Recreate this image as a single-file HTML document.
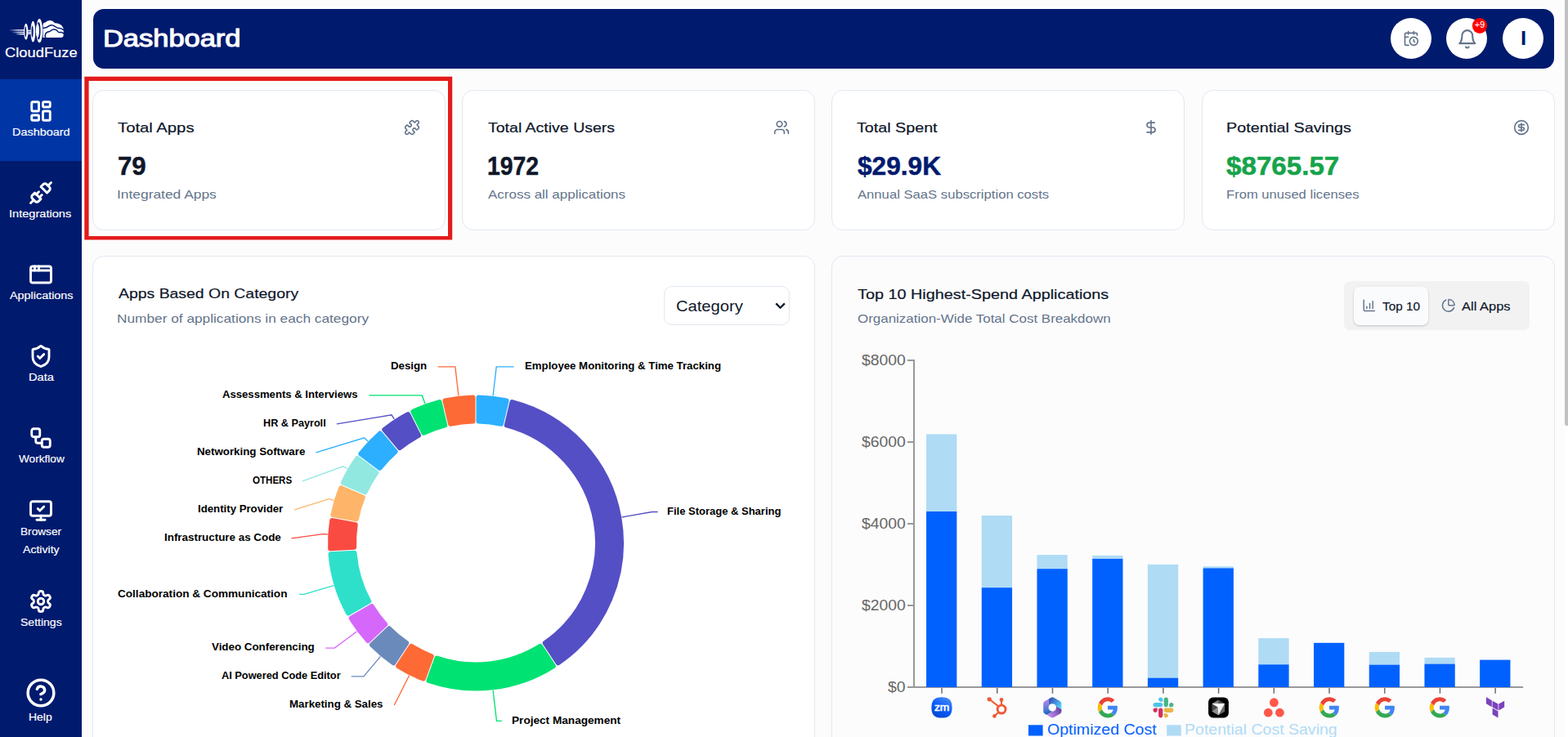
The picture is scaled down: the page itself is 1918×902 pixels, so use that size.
<!DOCTYPE html>
<html lang="en"><head><meta charset="utf-8"><title>Dashboard - CloudFuze</title>
<style>
*{box-sizing:border-box}
html,body{margin:0;padding:0}
body{width:1918px;height:902px;overflow:hidden;position:relative;background:#fcfcfd;font-family:"Liberation Sans",sans-serif}
.abs,.t,.ic{position:absolute}
.t{white-space:nowrap;line-height:1;transform-origin:0 0;display:block}
.side{left:0;top:0;width:100px;height:902px;background:#001a6e}
.act{left:0;top:97px;width:100px;height:100px;background:#0035a6}
.top{left:114px;top:10.8px;width:1787.2px;height:73px;border-radius:13px;background:#001a6e}
.rnd{width:50.4px;height:50.4px;border-radius:50%;background:#fff;top:21.8px}
.badge{left:1800.8px;top:22px;width:18.6px;height:18.6px;border-radius:50%;background:#ff0000}
.card{background:#fff;border:1px solid #e2e8f0;border-radius:14px}
.hl{left:103.3px;top:93.6px;width:450px;height:199.2px;border:5.2px solid #e41a1a}
.sel{left:812px;top:350px;width:154px;height:48px;border:1px solid #e2e8f0;border-radius:10px;background:#fff}
.tabs{left:1644px;top:343.8px;width:227.2px;height:60.2px;border-radius:7px;background:#f2f2f3}
.tab{left:1656px;top:351px;width:91.2px;height:46.9px;border-radius:7px;background:#fafbfd;box-shadow:0 1px 3px rgba(0,0,0,.13),0 1px 2px rgba(0,0,0,.08)}
.track{left:1914px;top:0;width:4px;height:902px;background:#fff}
.thumb{left:1913.8px;top:-4px;width:8px;height:524.7px;border-radius:2.5px;background:#c1c1c1}
svg.full{left:0;top:0}
</style></head>
<body>
<div class="abs" style="left:100px;top:0;width:1.4px;height:902px;background:#fff"></div>
<nav class="abs side">
<div class="abs act"></div>
<svg class="ic" style="left:0;top:0" width="100" height="60" viewBox="0 0 100 60" fill="none">
<defs><linearGradient id="sl" x1="0" y1="0" x2="1" y2="0"><stop offset="0" stop-color="#fff" stop-opacity="0"/><stop offset="0.5" stop-color="#fff" stop-opacity=".8"/><stop offset="1" stop-color="#fff"/></linearGradient></defs>
<rect x="11" y="36.1" width="20" height="1.5" fill="url(#sl)"/><rect x="14" y="38.8" width="17" height="1.5" fill="url(#sl)"/><rect x="18.5" y="41" width="12.5" height="1.5" fill="url(#sl)"/>
<path d="M34.3 37.4h4.800M34.300 39.500h4.800M34.300 41.400h4.800" stroke="#fff" stroke-width="1.3"/>
<ellipse cx="31.8" cy="38.8" rx="2.6" ry="10" fill="#fff"/><ellipse cx="31.300" cy="38.800" rx="1" ry="6.500" fill="#001a6e"/>
<ellipse cx="40.4" cy="38.7" rx="2.9" ry="12.9" fill="#fff"/><ellipse cx="39.600" cy="38.700" rx="1.100" ry="7.200" fill="#001a6e"/>
<ellipse cx="48.2" cy="37.7" rx="3.9" ry="14.6" fill="#fff"/><ellipse cx="47.300" cy="37.700" rx="2.300" ry="10.800" fill="#001a6e"/><ellipse cx="46" cy="37.600" rx="2" ry="8.600" fill="#fff"/>
<path d="M52.6 46V30.200q.1-2.600 2.800-2.700 2.100-2.700 5.800-2.600 3.900.200 5.600 3.300 5-.500 8.500 2.900 2.600 2.700 2.400 6.100v5.800q-.100 3-3.200 3Z" fill="#fff"/>
<path d="M52.400 34.200c2.800.300 4.700-.300 6.500-1.800 2.500-2.100 5.400-2.200 8-.300 1.800 1.400 3 2.400 5.200 2.300 2.300-.100 4.300.800 5.800 2.600" stroke="#001a6e" stroke-width="1.500"/>
<path d="M55.600 46.500c-.900-3.300.100-6.500 3-7.500 1.500-.500 2.300-.400 3.300-1.300 2.700-2.400 6.600-2.200 8.700.700 1 1.300 1.600 1.600 3.200 1.200 2-.500 3.600.400 4.200 2" stroke="#001a6e" stroke-width="1.500"/>
</svg>

<svg class="ic" style="left:35.00px;top:121.00px" width="30" height="30" viewBox="0 0 24 24" fill="none" stroke="#fff" stroke-width="2.3" stroke-linecap="round" stroke-linejoin="round"><rect width="7" height="9" x="3" y="3" rx="1"/><rect width="7" height="5" x="14" y="3" rx="1"/><rect width="7" height="9" x="14" y="12" rx="1"/><rect width="7" height="5" x="3" y="16" rx="1"/></svg>
<svg class="ic" style="left:35.00px;top:221.00px" width="30" height="30" viewBox="0 0 24 24" fill="none" stroke="#fff" stroke-width="2.3" stroke-linecap="round" stroke-linejoin="round"><path d="m19 5 3-3"/><path d="m2 22 3-3"/><path d="M6.3 20.3a2.4 2.4 0 0 0 3.4 0L12 18l-6-6-2.3 2.3a2.4 2.4 0 0 0 0 3.4Z"/><path d="M7.5 13.5 10 11"/><path d="M10.5 16.5 13 14"/><path d="m12 6 6 6 2.3-2.3a2.4 2.4 0 0 0 0-3.4l-2.6-2.6a2.4 2.4 0 0 0-3.4 0Z"/></svg>
<svg class="ic" style="left:35.00px;top:321.00px" width="30" height="30" viewBox="0 0 24 24" fill="none" stroke="#fff" stroke-width="2.3" stroke-linecap="round" stroke-linejoin="round"><rect x="2" y="4" width="20" height="16" rx="2"/><path d="M10 4v4"/><path d="M2 8h20"/><path d="M6 4v4"/></svg>
<svg class="ic" style="left:35.00px;top:421.00px" width="30" height="30" viewBox="0 0 24 24" fill="none" stroke="#fff" stroke-width="2.3" stroke-linecap="round" stroke-linejoin="round"><path d="M20 13c0 5-3.5 7.5-7.66 8.95a1 1 0 0 1-.67-.01C7.5 20.5 4 18 4 13V6a1 1 0 0 1 1-1c2 0 4.5-1.2 6.24-2.72a1.17 1.17 0 0 1 1.52 0C14.51 3.81 17 5 19 5a1 1 0 0 1 1 1z"/><path d="m9 12 2 2 4-4"/></svg>
<svg class="ic" style="left:35.00px;top:521.00px" width="30" height="30" viewBox="0 0 24 24" fill="none" stroke="#fff" stroke-width="2.3" stroke-linecap="round" stroke-linejoin="round"><rect width="8" height="8" x="3" y="3" rx="2"/><path d="M7 11v4a2 2 0 0 0 2 2h4"/><rect width="8" height="8" x="13" y="13" rx="2"/></svg>
<svg class="ic" style="left:35.00px;top:610.00px" width="30" height="30" viewBox="0 0 24 24" fill="none" stroke="#fff" stroke-width="2.3" stroke-linecap="round" stroke-linejoin="round"><path d="m9 10 2 2 4-4"/><rect width="20" height="14" x="2" y="3" rx="2"/><path d="M12 17v4"/><path d="M8 21h8"/></svg>
<svg class="ic" style="left:35.00px;top:721.00px" width="30" height="30" viewBox="0 0 24 24" fill="none" stroke="#fff" stroke-width="2.3" stroke-linecap="round" stroke-linejoin="round"><path d="M12.22 2h-.44a2 2 0 0 0-2 2v.18a2 2 0 0 1-1 1.73l-.43.25a2 2 0 0 1-2 0l-.15-.08a2 2 0 0 0-2.73.73l-.22.38a2 2 0 0 0 .73 2.73l.15.1a2 2 0 0 1 1 1.72v.51a2 2 0 0 1-1 1.74l-.15.09a2 2 0 0 0-.73 2.73l.22.38a2 2 0 0 0 2.73.73l.15-.08a2 2 0 0 1 2 0l.43.25a2 2 0 0 1 1 1.73V20a2 2 0 0 0 2 2h.44a2 2 0 0 0 2-2v-.18a2 2 0 0 1 1-1.73l.43-.25a2 2 0 0 1 2 0l.15.08a2 2 0 0 0 2.73-.73l.22-.39a2 2 0 0 0-.73-2.73l-.15-.08a2 2 0 0 1-1-1.74v-.5a2 2 0 0 1 1-1.74l.15-.09a2 2 0 0 0 .73-2.73l-.22-.38a2 2 0 0 0-2.73-.73l-.15.08a2 2 0 0 1-2 0l-.43-.25a2 2 0 0 1-1-1.73V4a2 2 0 0 0-2-2z"/><circle cx="12" cy="12" r="3"/></svg>
<svg class="ic" style="left:30.70px;top:828.80px" width="38" height="38" viewBox="0 0 24 24" fill="none" stroke="#fff" stroke-width="2.2" stroke-linecap="round" stroke-linejoin="round"><circle cx="12" cy="12" r="10"/><path d="M9.09 9a3 3 0 0 1 5.83 1c0 2-3 3-3 3"/><path d="M12 17h.01"/></svg>
<span class="t" style="left:6.04px;top:56px;font-size:17.4px;transform:scaleX(1.0540);-webkit-text-stroke:0.21px #ffffff;color:#ffffff">CloudFuze</span>
<span class="t" style="left:15.21px;top:156px;font-size:12.3px;transform:scaleX(1.1742);-webkit-text-stroke:0.15px #ffffff;color:#ffffff">Dashboard</span>
<span class="t" style="left:11.27px;top:256px;font-size:12.3px;transform:scaleX(1.1856);-webkit-text-stroke:0.15px #ffffff;color:#ffffff">Integrations</span>
<span class="t" style="left:11.95px;top:356px;font-size:12.3px;transform:scaleX(1.1694);-webkit-text-stroke:0.15px #ffffff;color:#ffffff">Applications</span>
<span class="t" style="left:34.64px;top:456px;font-size:12.3px;transform:scaleX(1.1924);-webkit-text-stroke:0.15px #ffffff;color:#ffffff">Data</span>
<span class="t" style="left:22.64px;top:556px;font-size:12.3px;transform:scaleX(1.1073);-webkit-text-stroke:0.15px #ffffff;color:#ffffff">Workflow</span>
<span class="t" style="left:24.76px;top:645px;font-size:12.3px;transform:scaleX(1.1109);-webkit-text-stroke:0.15px #ffffff;color:#ffffff">Browser</span>
<span class="t" style="left:27.79px;top:667px;font-size:12.3px;transform:scaleX(1.1464);-webkit-text-stroke:0.15px #ffffff;color:#ffffff">Activity</span>
<span class="t" style="left:24.94px;top:756px;font-size:12.3px;transform:scaleX(1.1400);-webkit-text-stroke:0.15px #ffffff;color:#ffffff">Settings</span>
<span class="t" style="left:35.40px;top:872px;font-size:12.3px;transform:scaleX(1.1342);-webkit-text-stroke:0.15px #ffffff;color:#ffffff">Help</span>
</nav>
<header class="abs top"></header>
<span class="t" style="left:126.30px;top:32px;font-size:30px;transform:scaleX(1.1477);-webkit-text-stroke:1.10px #ffffff;color:#ffffff">Dashboard</span>
<div class="abs rnd" style="left:1700.9px"></div>
<div class="abs rnd" style="left:1768.9px"></div>
<div class="abs rnd" style="left:1837.9px"></div>
<svg class="ic" style="left:1716.10px;top:37.00px" width="20" height="20" viewBox="0 0 24 24" fill="none" stroke="#64748b" stroke-width="2" stroke-linecap="round" stroke-linejoin="round"><path d="M21 7.5V6a2 2 0 0 0-2-2H5a2 2 0 0 0-2 2v14a2 2 0 0 0 2 2h3.5"/><path d="M16 2v4"/><path d="M8 2v4"/><path d="M3 10h5"/><path d="M17.5 17.5 16 16.3V14"/><circle cx="16" cy="16" r="6"/></svg>
<svg class="ic" style="left:1781.70px;top:34.70px" width="25.6" height="25.6" viewBox="0 0 24 24" fill="none" stroke="#64748b" stroke-width="1.9" stroke-linecap="round" stroke-linejoin="round"><path d="M6 8a6 6 0 0 1 12 0c0 7 3 9 3 9H3s3-2 3-9"/><path d="M10.3 21a1.94 1.94 0 0 0 3.4 0"/></svg>
<div class="abs badge"></div>
<span class="t" style="left:1804.38px;top:25px;font-size:10.6px;transform:scaleX(0.9995);-webkit-text-stroke:0.13px #ffffff;color:#ffffff">+9</span>
<span class="t" style="left:1859.74px;top:35px;font-size:24px;transform:scaleX(1.0743);font-weight:700;color:#001a6e">I</span>
<section class="abs card" style="left:113px;top:110px;width:432px;height:172px"></section>
<section class="abs card" style="left:565px;top:110px;width:432px;height:172px"></section>
<section class="abs card" style="left:1017px;top:110px;width:432px;height:172px"></section>
<section class="abs card" style="left:1470px;top:110px;width:432px;height:172px"></section>
<svg class="abs full" width="1918" height="902" viewBox="0 0 1918 902"><path fill="#e31b1b" fill-rule="evenodd" d="M103.3 93.8H553.2V293.6H103.3ZM108.6 99V289H548V99Z"/></svg>
<span class="t" style="left:144.07px;top:148px;font-size:17.4px;transform:scaleX(1.1655);-webkit-text-stroke:0.21px #0f172a;color:#0f172a">Total Apps</span>
<span class="t" style="left:143.67px;top:187px;font-size:32px;transform:scaleX(0.9756);font-weight:700;-webkit-text-stroke:0.50px #0f172a;color:#0f172a">79</span>
<span class="t" style="left:143.16px;top:230px;font-size:15px;transform:scaleX(1.1589);color:#64748b">Integrated Apps</span>
<span class="t" style="left:596.84px;top:148px;font-size:17.4px;transform:scaleX(1.1222);-webkit-text-stroke:0.21px #0f172a;color:#0f172a">Total Active Users</span>
<span class="t" style="left:595.57px;top:187px;font-size:32px;transform:scaleX(0.8865);font-weight:700;-webkit-text-stroke:0.50px #0f172a;color:#0f172a">1972</span>
<span class="t" style="left:597.38px;top:230px;font-size:15px;transform:scaleX(1.1323);color:#64748b">Across all applications</span>
<span class="t" style="left:1048.46px;top:148px;font-size:17.4px;transform:scaleX(1.1329);-webkit-text-stroke:0.21px #0f172a;color:#0f172a">Total Spent</span>
<span class="t" style="left:1048.61px;top:187px;font-size:32px;transform:scaleX(0.9887);font-weight:700;-webkit-text-stroke:0.50px #001a6e;color:#001a6e">$29.9K</span>
<span class="t" style="left:1049.12px;top:230px;font-size:15px;transform:scaleX(1.1099);color:#64748b">Annual SaaS subscription costs</span>
<span class="t" style="left:1499.74px;top:148px;font-size:17.4px;transform:scaleX(1.1372);-webkit-text-stroke:0.21px #0f172a;color:#0f172a">Potential Savings</span>
<span class="t" style="left:1500.29px;top:187px;font-size:32px;transform:scaleX(1.0363);font-weight:700;-webkit-text-stroke:0.50px #16a34a;color:#16a34a">$8765.57</span>
<span class="t" style="left:1499.86px;top:230px;font-size:15px;transform:scaleX(1.1073);color:#64748b">From unused licenses</span>
<svg class="ic" style="left:494.20px;top:146.00px" width="20" height="20" viewBox="0 0 24 24" fill="none" stroke="#64748b" stroke-width="2" stroke-linecap="round" stroke-linejoin="round"><path d="M19.439 7.85c-.049.322.059.648.289.878l1.568 1.568c.47.47.706 1.087.706 1.704s-.235 1.233-.706 1.704l-1.611 1.611a.98.98 0 0 1-.837.276c-.47-.07-.802-.48-.968-.925a2.501 2.501 0 1 0-3.214 3.214c.446.166.855.497.925.968a.979.979 0 0 1-.276.837l-1.61 1.61a2.404 2.404 0 0 1-1.705.707 2.402 2.402 0 0 1-1.704-.706l-1.568-1.568a1.026 1.026 0 0 0-.877-.29c-.493.074-.84.504-1.02.968a2.5 2.5 0 1 1-3.237-3.237c.464-.18.894-.527.967-1.02a1.026 1.026 0 0 0-.289-.877l-1.568-1.568A2.402 2.402 0 0 1 1.998 12c0-.617.236-1.234.706-1.704L4.23 8.77c.24-.24.581-.353.917-.303.515.077.877.528 1.073 1.01a2.5 2.5 0 1 0 3.259-3.259c-.482-.196-.933-.558-1.01-1.073-.05-.336.062-.676.303-.917l1.525-1.525A2.402 2.402 0 0 1 12 1.998c.617 0 1.234.236 1.704.706l1.568 1.568c.23.23.556.338.877.29.493-.074.84-.504 1.02-.968a2.5 2.5 0 1 1 3.237 3.237c-.464.18-.894.527-.967 1.02Z"/></svg>
<svg class="ic" style="left:946.00px;top:146.00px" width="20" height="20" viewBox="0 0 24 24" fill="none" stroke="#64748b" stroke-width="2" stroke-linecap="round" stroke-linejoin="round"><path d="M16 21v-2a4 4 0 0 0-4-4H6a4 4 0 0 0-4 4v2"/><circle cx="9" cy="7" r="4"/><path d="M22 21v-2a4 4 0 0 0-3-3.87"/><path d="M16 3.13a4 4 0 0 1 0 7.75"/></svg>
<svg class="ic" style="left:1398.00px;top:146.00px" width="20" height="20" viewBox="0 0 24 24" fill="none" stroke="#64748b" stroke-width="2" stroke-linecap="round" stroke-linejoin="round"><line x1="12" x2="12" y1="2" y2="22"/><path d="M17 5H9.5a3.5 3.5 0 0 0 0 7h5a3.5 3.5 0 0 1 0 7H6"/></svg>
<svg class="ic" style="left:1851.00px;top:146.20px" width="20" height="20" viewBox="0 0 24 24" fill="none" stroke="#64748b" stroke-width="2" stroke-linecap="round" stroke-linejoin="round"><circle cx="12" cy="12" r="10"/><path d="M16 8h-6a2 2 0 1 0 0 4h4a2 2 0 1 1 0 4H8"/><path d="M12 18V6"/></svg>
<section class="abs card" style="left:113px;top:313px;width:884px;height:640px"></section>
<section class="abs card" style="left:1017px;top:313px;width:885px;height:640px;background:#fcfcfd"></section>
<span class="t" style="left:144.87px;top:351px;font-size:17.4px;transform:scaleX(1.1161);-webkit-text-stroke:0.21px #0f172a;color:#0f172a">Apps Based On Category</span>
<span class="t" style="left:143.37px;top:382px;font-size:15px;transform:scaleX(1.1508);color:#64748b">Number of applications in each category</span>
<div class="abs sel"></div>
<span class="t" style="left:827.46px;top:366px;font-size:18.5px;transform:scaleX(1.0894);color:#0f172a">Category</span>
<svg class="ic" style="left:948.1px;top:370.1px" width="13" height="9" viewBox="0 0 13 9" fill="none" stroke="#0f172a" stroke-width="2.3" stroke-linecap="butt" stroke-linejoin="miter"><path d="M1.2 1.4 6.5 6.7 11.8 1.4"/></svg>
<svg class="abs full" width="1918" height="902" viewBox="0 0 1918 902">
<g fill="none" stroke-width="1.350">
<path d="M628.50 448.90L607.20 448.90L603.77 478.27L603.07 484.23" stroke="#2caffe"/>
<path d="M804.50 626.50L797.51 626.50L766.65 631.94L760.74 632.98" stroke="#544fc5"/>
<path d="M613.90 882.40L607.47 882.40L603.77 850.73L603.07 844.77" stroke="#00e272"/>
<path d="M482.30 862.90L482.36 862.90L497.85 832.06L500.54 826.69" stroke="#fe6a35"/>
<path d="M429.70 827.90L444.89 827.90L461.48 808.13L465.33 803.54" stroke="#6b8abc"/>
<path d="M398.20 793.10L409.26 793.10L431.60 776.47L436.41 772.88" stroke="#d568fb"/>
<path d="M366.00 727.40L371.90 727.40L402.38 718.28L408.12 716.55" stroke="#2ee0ca"/>
<path d="M356.40 658.90L394.82 653.60L400.81 653.95" stroke="#fa4b42"/>
<path d="M360.30 623.90L402.38 610.72L408.12 612.45" stroke="#feb56a"/>
<path d="M370.00 588.90L419.62 570.75L424.82 573.75" stroke="#91e8e1"/>
<path d="M386.40 553.90L445.62 535.83L449.98 539.95" stroke="#2caffe"/>
<path d="M411.90 518.90L478.97 507.85L482.26 512.86" stroke="#544fc5"/>
<path d="M451.30 483.90L516.27 483.90L517.87 488.31L519.92 493.95" stroke="#00e272"/>
<path d="M535.50 448.90L556.80 448.90L560.23 478.27L560.93 484.23" stroke="#fe6a35"/>
</g>
<g stroke-linejoin="round" stroke-width="6">
<path d="M585.50 486.53A178.00 178.00 0 0 1 619.64 490.52L612.95 518.75A149.00 149.00 0 0 0 585.50 515.54Z" fill="#2caffe" stroke="#2caffe"/>
<path d="M626.45 492.14A178.00 178.00 0 0 1 682.72 811.26L666.78 787.03A149.00 149.00 0 0 0 619.76 520.36Z" fill="#544fc5" stroke="#544fc5"/>
<path d="M676.87 815.11A178.00 178.00 0 0 1 524.42 832.93L534.34 805.67A149.00 149.00 0 0 0 660.93 790.88Z" fill="#00e272" stroke="#00e272"/>
<path d="M517.84 830.54A178.00 178.00 0 0 1 487.13 815.11L503.07 790.88A149.00 149.00 0 0 0 527.76 803.28Z" fill="#fe6a35" stroke="#fe6a35"/>
<path d="M481.28 811.26A178.00 178.00 0 0 1 454.95 789.17L476.05 769.27A149.00 149.00 0 0 0 497.22 787.03Z" fill="#6b8abc" stroke="#6b8abc"/>
<path d="M450.15 784.08A178.00 178.00 0 0 1 429.63 756.51L454.75 742.01A149.00 149.00 0 0 0 471.25 764.18Z" fill="#d568fb" stroke="#d568fb"/>
<path d="M426.13 750.45A178.00 178.00 0 0 1 404.54 678.34L433.50 676.66A149.00 149.00 0 0 0 451.25 735.95Z" fill="#2ee0ca" stroke="#2ee0ca"/>
<path d="M404.13 671.35A178.00 178.00 0 0 1 406.13 637.04L434.70 642.08A149.00 149.00 0 0 0 433.09 669.67Z" fill="#fa4b42" stroke="#fa4b42"/>
<path d="M407.35 630.15A178.00 178.00 0 0 1 417.20 597.23L443.84 608.71A149.00 149.00 0 0 0 435.91 635.19Z" fill="#feb56a" stroke="#feb56a"/>
<path d="M419.98 590.80A178.00 178.00 0 0 1 437.16 561.03L460.43 578.36A149.00 149.00 0 0 0 446.61 602.29Z" fill="#91e8e1" stroke="#91e8e1"/>
<path d="M441.34 555.42A178.00 178.00 0 0 1 464.92 530.42L483.57 552.64A149.00 149.00 0 0 0 464.61 572.74Z" fill="#2caffe" stroke="#2caffe"/>
<path d="M470.29 525.92A178.00 178.00 0 0 1 499.00 507.03L512.02 532.96A149.00 149.00 0 0 0 488.93 548.14Z" fill="#544fc5" stroke="#544fc5"/>
<path d="M505.26 503.89A178.00 178.00 0 0 1 537.55 492.14L544.24 520.36A149.00 149.00 0 0 0 518.28 529.81Z" fill="#00e272" stroke="#00e272"/>
<path d="M544.36 490.52A178.00 178.00 0 0 1 578.50 486.53L578.50 515.54A149.00 149.00 0 0 0 551.05 518.75Z" fill="#fe6a35" stroke="#fe6a35"/>
</g>
<g stroke="#999" stroke-width="2" fill="none">
<path d="M1118 440V842"/>
<path d="M1110 841H1863.100"/>
<path d="M1110 741H1118"/>
<path d="M1110 641H1118"/>
<path d="M1110 541H1118"/>
<path d="M1110 441H1118"/>
</g>
<rect x="1133.05" y="531.40" width="37.3" height="94.60" fill="#afdbf5"/>
<rect x="1133.05" y="626.00" width="37.3" height="215.00" fill="#0061ff"/>
<rect x="1200.76" y="631.00" width="37.3" height="88.20" fill="#afdbf5"/>
<rect x="1200.76" y="719.20" width="37.3" height="121.80" fill="#0061ff"/>
<rect x="1268.47" y="679.10" width="37.3" height="17.10" fill="#afdbf5"/>
<rect x="1268.47" y="696.20" width="37.3" height="144.80" fill="#0061ff"/>
<rect x="1336.18" y="679.90" width="37.3" height="4.00" fill="#afdbf5"/>
<rect x="1336.18" y="683.90" width="37.3" height="157.10" fill="#0061ff"/>
<rect x="1403.89" y="690.80" width="37.3" height="138.90" fill="#afdbf5"/>
<rect x="1403.89" y="829.70" width="37.3" height="11.30" fill="#0061ff"/>
<rect x="1471.60" y="693.20" width="37.3" height="2.20" fill="#afdbf5"/>
<rect x="1471.60" y="695.40" width="37.3" height="145.60" fill="#0061ff"/>
<rect x="1539.31" y="781.10" width="37.3" height="32.20" fill="#afdbf5"/>
<rect x="1539.31" y="813.30" width="37.3" height="27.70" fill="#0061ff"/>
<rect x="1607.02" y="786.80" width="37.3" height="54.20" fill="#0061ff"/>
<rect x="1674.73" y="797.90" width="37.3" height="15.70" fill="#afdbf5"/>
<rect x="1674.73" y="813.60" width="37.3" height="27.40" fill="#0061ff"/>
<rect x="1742.44" y="804.90" width="37.3" height="7.70" fill="#afdbf5"/>
<rect x="1742.44" y="812.60" width="37.3" height="28.40" fill="#0061ff"/>
<rect x="1810.15" y="807.60" width="37.3" height="33.40" fill="#0061ff"/>
<g stroke="#6e6e6e" stroke-width="1.500" fill="none">
<path d="M1152.05 842v6.800"/>
<path d="M1219.76 842v6.800"/>
<path d="M1287.47 842v6.800"/>
<path d="M1355.18 842v6.800"/>
<path d="M1422.89 842v6.800"/>
<path d="M1490.60 842v6.800"/>
<path d="M1558.31 842v6.800"/>
<path d="M1626.02 842v6.800"/>
<path d="M1693.73 842v6.800"/>
<path d="M1761.44 842v6.800"/>
<path d="M1829.15 842v6.800"/>
</g>
<rect x="1258" y="887.3" width="17.6" height="13.2" fill="#0061ff"/><rect x="1427.2" y="887.3" width="17.6" height="13.2" fill="#afdbf5"/>
</svg>
<span class="t" style="left:477.87px;top:441px;font-size:13px;transform:scaleX(1.0201);font-weight:700;color:#000000">Design</span>
<span class="t" style="left:642.07px;top:441px;font-size:13px;transform:scaleX(1.0169);font-weight:700;color:#000000">Employee Monitoring &amp; Time Tracking</span>
<span class="t" style="left:271.99px;top:476px;font-size:13px;transform:scaleX(1.0090);font-weight:700;color:#000000">Assessments &amp; Interviews</span>
<span class="t" style="left:322.21px;top:511px;font-size:13px;transform:scaleX(0.9734);font-weight:700;color:#000000">HR &amp; Payroll</span>
<span class="t" style="left:240.57px;top:546px;font-size:13px;transform:scaleX(1.0235);font-weight:700;color:#000000">Networking Software</span>
<span class="t" style="left:308.96px;top:581px;font-size:13px;transform:scaleX(0.8886);font-weight:700;color:#000000">OTHERS</span>
<span class="t" style="left:241.86px;top:616px;font-size:13px;transform:scaleX(1.0162);font-weight:700;color:#000000">Identity Provider</span>
<span class="t" style="left:200.66px;top:651px;font-size:13px;transform:scaleX(1.0294);font-weight:700;color:#000000">Infrastructure as Code</span>
<span class="t" style="left:815.91px;top:619px;font-size:13px;transform:scaleX(0.9997);font-weight:700;color:#000000">File Storage &amp; Sharing</span>
<span class="t" style="left:144.30px;top:720px;font-size:13px;transform:scaleX(1.0445);font-weight:700;color:#000000">Collaboration &amp; Communication</span>
<span class="t" style="left:258.99px;top:785px;font-size:13px;transform:scaleX(1.0261);font-weight:700;color:#000000">Video Conferencing</span>
<span class="t" style="left:271.00px;top:820px;font-size:13px;transform:scaleX(0.9834);font-weight:700;color:#000000">AI Powered Code Editor</span>
<span class="t" style="left:354.39px;top:855px;font-size:13px;transform:scaleX(1.0223);font-weight:700;color:#000000">Marketing &amp; Sales</span>
<span class="t" style="left:626.05px;top:875px;font-size:13px;transform:scaleX(1.0472);font-weight:700;color:#000000">Project Management</span>
<span class="t" style="left:1048.56px;top:352px;font-size:17.4px;transform:scaleX(1.1391);-webkit-text-stroke:0.21px #0f172a;color:#0f172a">Top 10 Highest-Spend Applications</span>
<span class="t" style="left:1048.92px;top:382px;font-size:15px;transform:scaleX(1.1299);color:#64748b">Organization-Wide Total Cost Breakdown</span>
<div class="abs tabs"></div><div class="abs tab"></div>
<svg class="ic" style="left:1666.00px;top:364.80px" width="17.6" height="17.6" viewBox="0 0 24 24" fill="none" stroke="#64748b" stroke-width="2" stroke-linecap="round" stroke-linejoin="round"><path d="M3 3v16a2 2 0 0 0 2 2h16"/><path d="M13 17V9"/><path d="M18 17V5"/><path d="M8 17v-3"/></svg>
<svg class="ic" style="left:1762.90px;top:365.10px" width="17.6" height="17.6" viewBox="0 0 24 24" fill="none" stroke="#64748b" stroke-width="2" stroke-linecap="round" stroke-linejoin="round"><path d="M21 12c.552 0 1.005-.449.95-.998a10 10 0 0 0-8.953-8.951c-.55-.055-.998.398-.998.95v8a1 1 0 0 0 1 1z"/><path d="M21.21 15.89A10 10 0 1 1 8 2.83"/></svg>
<span class="t" style="left:1690.70px;top:367px;font-size:15.5px;transform:scaleX(0.9893);-webkit-text-stroke:0.19px #0f172a;color:#0f172a">Top 10</span>
<span class="t" style="left:1787.56px;top:367px;font-size:15.5px;transform:scaleX(1.0636);-webkit-text-stroke:0.19px #0f172a;color:#0f172a">All Apps</span>
<span class="t" style="left:1053.67px;top:432px;font-size:18px;transform:scaleX(1.0728);color:#666666">$8000</span>
<span class="t" style="left:1053.67px;top:532px;font-size:18px;transform:scaleX(1.0728);color:#666666">$6000</span>
<span class="t" style="left:1053.67px;top:632px;font-size:18px;transform:scaleX(1.0728);color:#666666">$4000</span>
<span class="t" style="left:1053.67px;top:732px;font-size:18px;transform:scaleX(1.0728);color:#666666">$2000</span>
<span class="t" style="left:1086.38px;top:832px;font-size:18px;transform:scaleX(1.0728);color:#666666">$0</span>
<span class="t" style="left:1280.73px;top:884px;font-size:18px;transform:scaleX(1.0861);color:#0061ff">Optimized Cost</span>
<span class="t" style="left:1448.62px;top:884px;font-size:18px;transform:scaleX(1.0848);color:#b0dbf5">Potential Cost Saving</span>
<svg class="ic" style="left:1135.85px;top:850px" width="32" height="32" viewBox="0 0 32 32"><defs><linearGradient id="zg" x1="0.25" y1="1" x2="0.8" y2="0"><stop offset="0" stop-color="#0847cf"/><stop offset="0.5" stop-color="#0b5cff"/><stop offset="1" stop-color="#4a8cf7"/></linearGradient></defs><path d="M16 3.3C24.9 3.3 28.600 7 28.600 15.900S24.900 28.500 16 28.500 3.400 24.800 3.400 15.900 7.100 3.300 16 3.300Z" fill="url(#zg)"/><text x="6.900" y="19.900" font-family="Liberation Sans, sans-serif" font-weight="400" font-size="12.600" textLength="18.400" lengthAdjust="spacingAndGlyphs" fill="#fff" stroke="#fff" stroke-width="0.550">zm</text></svg>
<svg class="ic" style="left:1203.56px;top:850px" width="32" height="32" viewBox="0 0 32 32"><g fill="none" stroke="#f05a35" stroke-width="2.100" stroke-linecap="round"><circle cx="21.100" cy="18.100" r="4.950" stroke-width="2.900"/><path d="M21 6.600V12"/><path d="M6.400 6 16.600 13.800"/><path d="M12.600 26.200 16.500 22.500"/></g><g fill="#f05a35"><circle cx="21" cy="6.400" r="2.400"/><circle cx="6.200" cy="5.850" r="2.650"/><circle cx="12.400" cy="26.400" r="2.300"/></g></svg>
<svg class="ic" style="left:1271.27px;top:850px" width="32" height="32" viewBox="0 0 32 32"><defs><clipPath id="mh"><path clip-rule="evenodd" d="M13.900 3.700a3.400 3.400 0 0 1 3.300 0l7.800 4.500a3.400 3.400 0 0 1 1.700 2.900v9.500a3.400 3.400 0 0 1-1.700 2.900l-7.800 4.500a3.400 3.400 0 0 1-3.300 0l-7.800-4.500a3.400 3.400 0 0 1-1.700-2.900v-9.500a3.400 3.400 0 0 1 1.700-2.900ZM15.500 11.200a4.700 4.700 0 1 0 .010 0Z"/></clipPath><linearGradient id="ma" gradientUnits="userSpaceOnUse" x1="11" y1="7" x2="26.500" y2="17"><stop offset="0" stop-color="#3553b8"/><stop offset="0.5" stop-color="#4794dc"/><stop offset="1" stop-color="#50e6ff"/></linearGradient><linearGradient id="mb" gradientUnits="userSpaceOnUse" x1="7" y1="7" x2="11" y2="24"><stop offset="0" stop-color="#b583e8"/><stop offset="0.55" stop-color="#5b7fdc"/><stop offset="1" stop-color="#1c62b8"/></linearGradient><linearGradient id="mc" gradientUnits="userSpaceOnUse" x1="9" y1="26" x2="26" y2="18"><stop offset="0" stop-color="#cc8ff5"/><stop offset="0.5" stop-color="#9c6cd0"/><stop offset="1" stop-color="#64409a"/></linearGradient></defs><g transform="translate(0.8 0)"><g clip-path="url(#mh)"><path d="M0 32V29.900L8.600 24.700 14.900 21.200 15.500 16 20.200 14.200 32 21.100V32Z" fill="url(#mc)"/><path d="M11 0H0V29.900L8.600 24.700 14.900 21.200 15.500 16 11 12Z" fill="url(#mb)"/><path d="M11 0H32V21.100L20.200 14.200 15.500 16 11 12Z" fill="url(#ma)"/></g></g></svg>
<svg class="ic" style="left:1338.98px;top:850px" width="32" height="32" viewBox="0 0 32 32"><g transform="translate(3.7 3.2) scale(0.51458 0.52708)"><path fill="#EA4335" d="M24 9.5c3.540 0 6.710 1.220 9.210 3.600l6.850-6.850C35.900 2.380 30.470 0 24 0 14.620 0 6.510 5.380 2.560 13.220l7.980 6.190C12.430 13.720 17.740 9.500 24 9.500z"/><path fill="#4285F4" d="M46.980 24.550c0-1.570-.150-3.090-.380-4.550H24v9.020h12.940c-.580 2.960-2.260 5.480-4.780 7.180l7.730 6c4.510-4.180 7.090-10.360 7.090-17.650z"/><path fill="#FBBC05" d="M10.530 28.590c-.480-1.450-.760-2.990-.760-4.590s.270-3.140.760-4.590l-7.980-6.190C.920 16.460 0 20.120 0 24c0 3.880.920 7.540 2.560 10.780l7.970-6.190z"/><path fill="#34A853" d="M24 48c6.480 0 11.930-2.130 15.890-5.810l-7.730-6c-2.150 1.450-4.920 2.300-8.160 2.300-6.260 0-11.570-4.220-13.470-9.910l-7.980 6.190C6.510 42.620 14.620 48 24 48z"/></g></svg>
<svg class="ic" style="left:1406.69px;top:850px" width="32" height="32" viewBox="0 0 32 32"><g transform="translate(3.5 3.4) scale(0.20358 0.20440)"><path d="M25.800 77.600c0 7.100-5.800 12.900-12.900 12.900S0 84.700 0 77.600s5.800-12.900 12.900-12.900h12.900v12.900zm6.500 0c0-7.100 5.800-12.900 12.900-12.900s12.900 5.800 12.900 12.900v32.300c0 7.100-5.800 12.900-12.900 12.900s-12.900-5.800-12.900-12.900V77.600z" fill="#d5305f"/><path d="M45.200 25.800c-7.100 0-12.900-5.800-12.900-12.900S38.100 0 45.200 0s12.900 5.800 12.900 12.900v12.900H45.200zm0 6.500c7.100 0 12.900 5.800 12.900 12.900s-5.800 12.900-12.900 12.900H12.900C5.800 58.100 0 52.300 0 45.200s5.800-12.900 12.900-12.900h32.300z" fill="#4fc3ed"/><path d="M97 45.200c0-7.100 5.800-12.900 12.900-12.900s12.900 5.800 12.900 12.900-5.800 12.900-12.900 12.900H97V45.200zm-6.500 0c0 7.100-5.800 12.900-12.900 12.900s-12.900-5.800-12.900-12.900V12.900C64.700 5.800 70.500 0 77.600 0s12.900 5.800 12.900 12.900v32.300z" fill="#49b586"/><path d="M77.600 97c7.100 0 12.900 5.800 12.900 12.900s-5.800 12.900-12.900 12.900-12.900-5.800-12.900-12.900V97h12.900zm0-6.500c-7.100 0-12.900-5.800-12.900-12.900s5.800-12.900 12.900-12.900h32.300c7.100 0 12.900 5.800 12.900 12.900s-5.800 12.900-12.900 12.900H77.600z" fill="#e8b545"/></g></svg>
<svg class="ic" style="left:1474.40px;top:850px" width="32" height="32" viewBox="0 0 32 32"><rect x="4.100" y="3.400" width="24.800" height="25" rx="5.900" fill="#000"/><path d="M16.300 6.700 24.100 11.200V20.750L16.300 25.200 8.700 20.750V11.200Z" fill="#5c5c5c"/><path d="M8.700 11.200 16.300 6.700V11.200Z" fill="#858585"/><path d="M16.300 6.700 24.100 11.200H16.300Z" fill="#4f4f4f"/><path d="M8.700 11.200 15.600 15.600 8.700 20.750Z" fill="#4a4a4a"/><path d="M8.700 20.750 15.600 15.600 16.300 25.200Z" fill="#8f8f8f"/><path d="M24.100 11.200V20.750L16.300 25.200Z" fill="#666"/><path d="M8.700 11.200H24.100L16.300 25.200 15.600 15.600Z" fill="#f2f2f2"/><path d="M8.700 11.200H24.100L16.600 15.300Z" fill="#fff"/></svg>
<svg class="ic" style="left:1542.11px;top:850px" width="32" height="32" viewBox="0 0 32 32"><g fill="#ff584a"><circle cx="16.400" cy="9.800" r="5.450"/><circle cx="9.300" cy="22.200" r="5.400"/><circle cx="23.400" cy="22.200" r="5.400"/></g></svg>
<svg class="ic" style="left:1609.82px;top:850px" width="32" height="32" viewBox="0 0 32 32"><g transform="translate(3.7 3.2) scale(0.51458 0.52708)"><path fill="#EA4335" d="M24 9.5c3.540 0 6.710 1.220 9.210 3.600l6.850-6.850C35.900 2.380 30.470 0 24 0 14.620 0 6.510 5.380 2.560 13.220l7.980 6.190C12.430 13.720 17.740 9.500 24 9.500z"/><path fill="#4285F4" d="M46.980 24.550c0-1.570-.150-3.090-.380-4.550H24v9.020h12.940c-.580 2.960-2.260 5.480-4.780 7.180l7.730 6c4.510-4.180 7.090-10.360 7.090-17.650z"/><path fill="#FBBC05" d="M10.530 28.590c-.480-1.450-.760-2.990-.760-4.590s.270-3.140.760-4.590l-7.980-6.190C.920 16.460 0 20.120 0 24c0 3.880.920 7.540 2.560 10.780l7.970-6.190z"/><path fill="#34A853" d="M24 48c6.480 0 11.930-2.130 15.890-5.810l-7.730-6c-2.150 1.450-4.920 2.300-8.160 2.300-6.260 0-11.570-4.220-13.470-9.910l-7.980 6.190C6.510 42.620 14.620 48 24 48z"/></g></svg>
<svg class="ic" style="left:1677.53px;top:850px" width="32" height="32" viewBox="0 0 32 32"><g transform="translate(3.7 3.2) scale(0.51458 0.52708)"><path fill="#EA4335" d="M24 9.5c3.540 0 6.710 1.220 9.210 3.600l6.850-6.850C35.900 2.380 30.470 0 24 0 14.620 0 6.510 5.380 2.560 13.220l7.980 6.190C12.430 13.720 17.740 9.500 24 9.500z"/><path fill="#4285F4" d="M46.980 24.550c0-1.570-.150-3.090-.380-4.550H24v9.020h12.940c-.580 2.960-2.260 5.480-4.780 7.180l7.730 6c4.510-4.180 7.090-10.360 7.090-17.650z"/><path fill="#FBBC05" d="M10.530 28.590c-.480-1.450-.760-2.990-.760-4.590s.270-3.140.760-4.590l-7.980-6.190C.920 16.460 0 20.120 0 24c0 3.880.920 7.540 2.560 10.780l7.970-6.190z"/><path fill="#34A853" d="M24 48c6.480 0 11.930-2.130 15.890-5.810l-7.730-6c-2.150 1.450-4.920 2.300-8.160 2.300-6.260 0-11.570-4.220-13.470-9.910l-7.980 6.190C6.510 42.620 14.620 48 24 48z"/></g></svg>
<svg class="ic" style="left:1745.24px;top:850px" width="32" height="32" viewBox="0 0 32 32"><g transform="translate(3.7 3.2) scale(0.51458 0.52708)"><path fill="#EA4335" d="M24 9.5c3.540 0 6.710 1.220 9.210 3.600l6.850-6.850C35.900 2.380 30.470 0 24 0 14.620 0 6.510 5.380 2.560 13.220l7.980 6.190C12.430 13.720 17.740 9.500 24 9.500z"/><path fill="#4285F4" d="M46.980 24.550c0-1.570-.150-3.090-.380-4.550H24v9.020h12.940c-.580 2.960-2.260 5.480-4.780 7.180l7.730 6c4.510-4.180 7.090-10.360 7.090-17.650z"/><path fill="#FBBC05" d="M10.530 28.590c-.480-1.450-.760-2.990-.760-4.590s.270-3.140.760-4.590l-7.980-6.190C.920 16.460 0 20.120 0 24c0 3.880.920 7.540 2.560 10.780l7.970-6.190z"/><path fill="#34A853" d="M24 48c6.480 0 11.930-2.130 15.890-5.810l-7.730-6c-2.150 1.450-4.920 2.300-8.160 2.300-6.260 0-11.570-4.220-13.470-9.910l-7.980 6.190C6.510 42.620 14.620 48 24 48z"/></g></svg>
<svg class="ic" style="left:1812.95px;top:850px" width="32" height="32" viewBox="0 0 32 32"><g transform="translate(3.4 3.2) scale(1.05417 1.05000)"><path fill="#7b42bc" d="M1.440 0v7.575l6.561 3.790V3.787zm21.120 4.227-6.561 3.791v7.574l6.560-3.787zM8.720 4.230v7.575l6.561 3.787V8.018zm0 8.405v7.575L15.280 24v-7.578z"/></g></svg>
<div class="abs track"></div><div class="abs thumb"></div>
</body></html>
